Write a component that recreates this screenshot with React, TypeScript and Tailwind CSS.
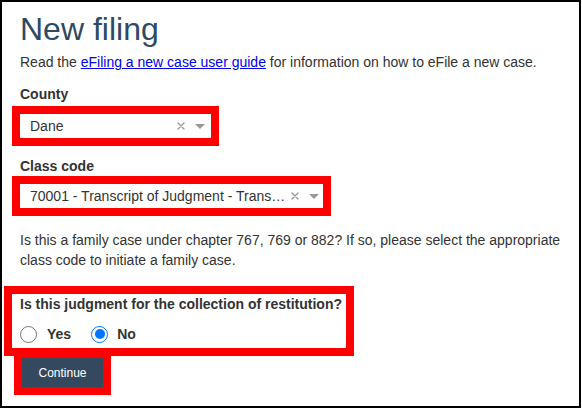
import React from "react";

function ClearX() {
  return (
    <svg width="8" height="8" viewBox="0 0 8 8" className="shrink-0">
      <path d="M1 1 L7 7 M7 1 L1 7" stroke="#999" strokeWidth="1.4" strokeLinecap="round" />
    </svg>
  );
}

function Caret() {
  return (
    <svg width="10" height="5" viewBox="0 0 10 5" className="shrink-0">
      <path d="M0 0 L10 0 L5 5 Z" fill="#999" />
    </svg>
  );
}

function SelectBox({ value, width }: { value: string; width: string }) {
  return (
    <div className="-ml-2 inline-flex border-8 border-[#ff0000] bg-white">
      <div className={`${width} h-[24px] flex items-center pl-[10px] pr-[6px] text-[14px] text-[#333]`}>
        <span className="flex-1 whitespace-nowrap">{value}</span>
        <span className="ml-[6px] flex items-center">
          <ClearX />
        </span>
        <span className="ml-[10px] flex items-center">
          <Caret />
        </span>
      </div>
    </div>
  );
}

export default function App() {
  return (
    <div
      className="w-[581px] h-[408px] border-2 border-black bg-white pl-[18px] pt-[8px] text-[#333] overflow-hidden"
      style={{ fontFamily: '"Liberation Sans", Arial, sans-serif' }}
    >
      <h1 className="text-[32px] leading-[38px] text-[#2e4a62]">New filing</h1>
      <p className="mt-[4px] text-[14px] leading-5">
        Read the{" "}
        <a href="#" className="text-[#0000ee] underline">
          eFiling a new case user guide
        </a>{" "}
        for information on how to eFile a new case.
      </p>
      <div className="mt-[12px] text-[14px] leading-5 font-bold">County</div>
      <div className="mt-[2px]">
        <SelectBox value="Dane" width="w-[191px]" />
      </div>
      <div className="mt-[10px] text-[14px] leading-5 font-bold">Class code</div>
      <div>
        <SelectBox value="70001 - Transcript of Judgment - Trans…" width="w-[303px]" />
      </div>
      <p className="mt-[14px] text-[14px] leading-5 w-[545px]">
        Is this a family case under chapter 767, 769 or 882? If so, please select the appropriate class
        code to initiate a family case.
      </p>
      <div className="mt-[16px] -ml-4 w-[350px] border-8 border-[#ff0000] bg-white px-2 pb-[4px]">
        <div className="text-[14px] leading-5 font-bold whitespace-nowrap">
          Is this judgment for the collection of restitution?
        </div>
        <div className="mt-[10px] h-[20px] flex items-center text-[14px] font-bold">
          <span className="w-[17px] h-[17px] rounded-full border border-[#767676] bg-white" />
          <span className="ml-[10px]">Yes</span>
          <span className="ml-[20px] w-[17px] h-[17px] rounded-full border-[1.5px] border-[#0075ff] bg-white flex items-center justify-center">
            <span className="w-[10px] h-[10px] rounded-full bg-[#0075ff]" />
          </span>
          <span className="ml-[9px]">No</span>
        </div>
      </div>
      <div className="-mt-[6px] -ml-[6px] inline-flex border-8 border-[#ff0000] relative">
        <button className="w-[81px] h-[29px] bg-[#34495e] text-white text-[12px]">Continue</button>
      </div>
    </div>
  );
}
